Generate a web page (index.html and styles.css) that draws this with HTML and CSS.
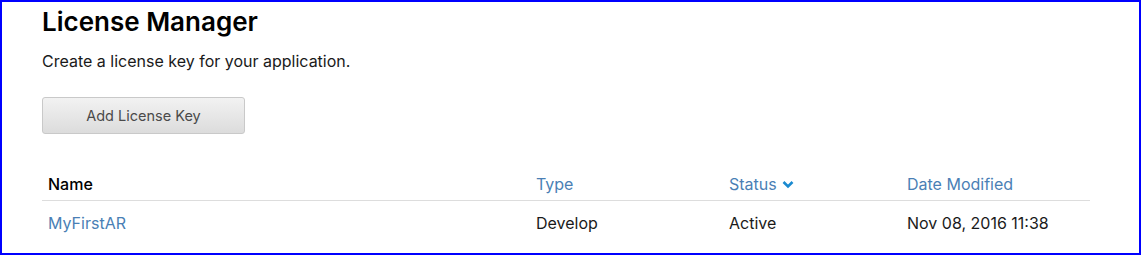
FILE: index.html
```html
<!DOCTYPE html>
<html lang="en">
<head>
  <meta charset="UTF-8">
  <meta name="viewport" content="width=device-width, initial-scale=1.0">
  <title>License Manager</title>
  <link rel="stylesheet" href="styles.css">
</head>
<body>
  <div class="frame">
    <h1>License Manager</h1>
    <p class="intro">Create a license key for your application.</p>
    <button class="add-key">Add License Key</button>

    <table class="licenses">
      <thead>
        <tr>
          <th class="col-name">Name</th>
          <th class="col-type"><a href="#">Type</a></th>
          <th class="col-status">
            <a href="#">Status</a>
            <svg class="sort" width="12" height="9" viewBox="0 0 12 9"><path d="M1.5 2 L6 6.5 L10.5 2" fill="none" stroke="#1a8ad0" stroke-width="2.6"/></svg>
          </th>
          <th class="col-date"><a href="#">Date Modified</a></th>
        </tr>
      </thead>
      <tbody>
        <tr>
          <td><a href="#">MyFirstAR</a></td>
          <td>Develop</td>
          <td>Active</td>
          <td>Nov 08, 2016 11:38</td>
        </tr>
      </tbody>
    </table>
  </div>
</body>
</html>
```

FILE: styles.css
```css
html, body {
  margin: 0;
  padding: 0;
}

body {
  font-family: Inter, "Open Sans", sans-serif;
  color: #1a1a1a;
  background: #fff;
}

.frame {
  height: 255px;
  box-sizing: border-box;
  border: 2px solid #0000ff;
  padding: 0 49px 0 40px;
}

h1 {
  margin: 0;
  padding-top: 4px;
  font-size: 26px;
  font-weight: 600;
  line-height: 32px;
  color: #000;
}

.intro {
  margin: 13px 0 0;
  font-size: 16px;
  line-height: 20px;
}

.add-key {
  display: block;
  margin-top: 26px;
  width: 203px;
  height: 37px;
  border: 1px solid #c9c9c9;
  border-radius: 3px;
  background: linear-gradient(to bottom, #f2f2f2, #dcdcdc);
  font-family: inherit;
  font-size: 14.5px;
  color: #4a4a4a;
  cursor: pointer;
}

.licenses {
  margin-top: 36px;
  width: 100%;
  table-layout: fixed;
  border-collapse: collapse;
  font-size: 16px;
}

.licenses th,
.licenses td {
  text-align: left;
  padding: 0 6px;
  line-height: 20px;
  white-space: nowrap;
}

.licenses th {
  height: 24px;
  padding-bottom: 6px;
  vertical-align: bottom;
  font-weight: 500;
  color: #000;
  border-bottom: 1px solid #ddd;
}

.licenses td {
  height: 44px;
}

.licenses a {
  color: #4a7fb5;
  text-decoration: none;
  font-weight: 400;
}

.col-name { width: 476px; }
.col-type { width: 181px; }
.col-status { width: 166px; }

.sort {
  margin-left: 1px;
  vertical-align: 1px;
}
```
